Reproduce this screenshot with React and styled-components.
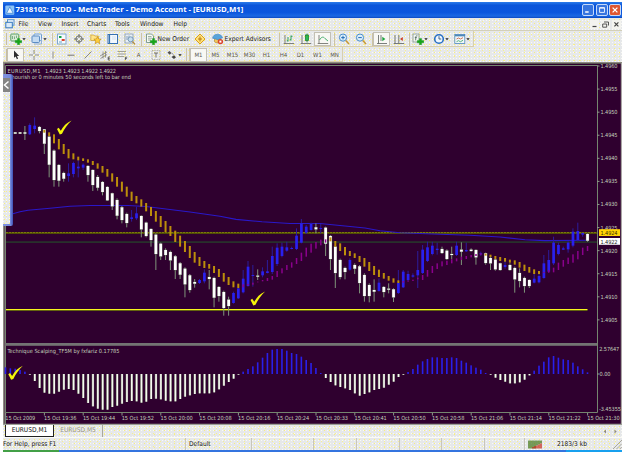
import styled, { createGlobalStyle, css } from "styled-components";

const GlobalStyle = createGlobalStyle`
    *{
        box-sizing: border-box;
    }
    html, body{
        margin: 0;
        padding: 0;
        background: #fff;
    }
    body{
        width: 625px;
        height: 452px;
        overflow: hidden;
        font-family: "DejaVu Sans Condensed", "DejaVu Sans", sans-serif;
        font-stretch: condensed;
    }
`

/* bars are 4.85px apart, 8 bars per time label */
const barX = (i) => 5.5 + i * 4.85;

/* each block: first bar, base y, rows of [high, body top, body bottom, low, up?] in thirds of a pixel */
const candleBlocks = [
    { start: 2, base: 80, rows: [
        [157,157,161,161],[157,157,161,161],[138,157,161,180],[130,135,163,165,1],[112,137,147,160,1],[138,141,153,160],
        [147,148,191,222],[168,170,254,292],[208,212,300,320],[252,255,302,320],[275,279,296,305],[250,280,288,305,1],
        [245,249,282,292,1],[240,260,265,292,1],[250,254,263,270,1],[255,258,285,305],[268,270,315,333],[285,291,323,332],
        [303,306,336,346],[318,321,361,363],[338,340,379,390],[355,360,407,418],[378,382,420,430],[398,402,429,442],
        [390,412,417,425,1],[380,400,415,420,1],
    ]},
    { start: 28, base: 180, rows: [
        [106,108,148,172],[125,128,168,172],[145,147,180,200],[160,164,222,270],[188,191,229,240],[205,210,225,240],
        [212,216,241,270],[225,229,270,297],[246,250,284,297],[262,266,313,352],[282,286,330,338],[297,306,311,323],
        [297,300,309,312,1],[268,278,304,310,1],[270,291,297,328],[290,294,353,382],[318,321,348,365],[332,336,384,407],
        [350,359,378,407],[335,339,369,371,1],[315,325,355,357,1],[270,296,337,340,1],[243,260,318,320,1],[255,285,287,320,1],
        [268,287,290,300],[262,274,286,292,1],[240,274,279,280,1],[200,228,276,282,1],[190,203,252,258,1],[188,200,228,232,1],
        [185,202,212,215,1],[200,204,207,208,1],
    ]},
    { start: 60, base: 200, rows: [
        [85,107,147,150,1],[57,70,128,130,1],[75,80,98,102,1],[68,72,90,92,1],[70,82,88,100],[72,84,86,100,1],
        [80,83,131,168],[105,108,177,210],[135,140,219,264],[176,180,231,238],[200,204,216,238],[175,180,209,212,1],
        [190,195,206,222],[195,199,249,280],[220,225,288,305],[250,255,288,307],[238,270,275,305],[235,248,273,275,1],
        [258,261,276,292],[250,266,269,280],[265,268,292,306],[210,249,279,282,1],[210,215,262,264,1],[212,222,240,243,1],
        [220,226,230,233,1],[153,210,226,264,1],[135,149,219,222,1],[125,142,183,186,1],[125,137,162,166,1],[128,146,150,164,1],
        [140,147,159,162],[148,152,177,180],[140,162,165,178],[125,137,165,168,1],[127,149,155,195],[128,150,154,156,1],
        [145,149,153,155],[148,150,172,194],[155,160,162,168,1],[158,160,189,194],[170,174,190,210],[175,179,208,212],
        [188,190,210,212],[178,195,201,206,1],[190,195,210,212],[200,204,238,278],[205,219,243,262],[230,234,258,278],
        [238,240,258,264],[222,236,248,250,1],[222,228,247,250,1],[165,190,234,236,1],[150,180,215,218,1],[110,128,190,195,1],
        [128,135,162,166,1],[140,145,149,150,1],[124,128,148,158,1],[85,95,137,142,1],[68,93,120,124,1],[98,99,104,110,1],
        [100,102,122,125],
    ]},
];

const trendBlocks = [
    { start: 8, base: 80, rows: [[150,158],[157,168],[163,190],[177,208],[192,222],[207,235],[220,238],[230,241],[235,243],[238,248],[243,255],[250,266],[258,278],[267,290],[280,305],[291,320],[305,335],[320,350],[335,363],[348,370]] },
    { start: 28, base: 180, rows: [[58,80],[69,94],[81,108],[93,125],[108,141],[123,156],[138,168],[152,186],[167,200],[183,216],[198,234],[216,248],[231,258],[243,264],[252,266],[258,279],[267,291],[279,305],[291,315],[304,322],[311,324]] },
    { start: 49, base: 180, up: true, rows: [[313,322],[312,316],[308,314],[305,307],[300,304],[294,303],[288,299],[273,291],[265,280],[255,270],[247,263],[234,252]] },
    { start: 61, base: 200, up: true, rows: [[158,183],[143,170],[131,158],[126,146],[119,136],[118,128]] },
    { start: 67, base: 200, rows: [[112,124],[123,140],[130,153],[141,166],[153,168],[160,174],[168,186],[174,200],[186,213],[198,225],[209,231],[219,236],[228,242],[235,248],[241,249]] },
    { start: 82, base: 200, up: true, rows: [[243,248],[242,245],[239,243],[233,238],[225,240],[210,230],[198,219],[190,207],[184,199],[182,195],[178,190],[175,184],[170,180],[168,177],[165,172],[162,168],[160,165]] },
    { start: 99, base: 200, rows: [[161,167],[164,171],[168,177],[171,183],[174,185],[179,188],[181,194],[186,203],[194,213],[201,218],[208,222],[213,222]] },
    { start: 111, base: 200, up: true, rows: [[216,219],[210,218],[203,217],[188,210],[180,200],[173,192],[163,188],[153,178],[143,165],[138,153]] },
];

/* bar ends in thirds of a pixel, the zero line is at 132 */
const histogram = [
    112,115,116,120,125,134,153,174,188,191,191,185,179,177,180,191,204,219,229,236,239,239,231,227,221,216,213,214,218,215,
    207,206,208,212,214,214,207,200,196,192,190,190,190,187,178,167,156,146,134,125,117,109,97,83,69,59,57,57,62,69,
    72,80,90,99,114,129,144,156,166,171,175,180,190,197,192,187,180,177,173,164,155,141,134,126,117,104,94,87,82,82,
    84,84,82,84,92,98,106,113,119,129,134,143,150,155,160,160,157,149,136,122,107,95,82,78,83,88,90,98,109,118,127,
];

const times = ["2009","19:36","19:44","19:52","20:00","20:08","20:16","20:24","20:33","20:41","20:50","20:58","21:06","21:14","21:22","21:30"];
const prices = ["1.4960","1.4955","1.4950","1.4945","1.4940","1.4935","1.4930","1.4925","1.4920","1.4915","1.4910","1.4905"];
const periods = ["M5","M15","M30","H1","H4","D1","W1","MN"];

function Candle({ x, base, row }){
    const [high, top, bottom, low, up] = row;
    const y = (v) => base + v / 3;
    return(
        <g>
            <rect x={x - 0.5} y={y(high)} width="1" height={(low - high) / 3} fill={up ? "#2c1c9c" : "#7f947a"} />
            {!up && <rect x={x - 1.7} y={y(top) - 0.3} width="3.4" height={(bottom - top) / 3 + 0.6} fill="#56604f" />}
            <rect x={x - 1.3} y={y(top)} width="2.7" height={Math.max(1, (bottom - top) / 3)} fill={up ? "#2a20ee" : "#ffffff"} />
        </g>
    )
}

function Check({ x, y }){
    return <path transform={`translate(${x} ${y})`} d="M0 8.4 L1.7 7.2 L3.8 10.2 C6 6 9.5 2.2 14.6 0 C11 3.5 7.4 8 5 13.2 L2.8 14 Z" fill="#f4f40a" />
}

function Chart(){
    return(
        <ChartSvg viewBox="3 62 619 363">
            <rect x="3" y="62" width="619" height="363" fill="#2f002f" />
            <path d="M3 62.5H622" stroke="#8d8a82" />
            <path d="M3 63.5H622" stroke="#595650" />
            <path d="M3.8 62V425" stroke="#8d8d83" strokeWidth="1.6" />
            <path d="M621.4 63V425" stroke="#a9a5a4" strokeWidth="1.2" />
            <path d="M3 424.5H622" stroke="#9da096" strokeWidth="1.6" />
            <path d="M5.5 424V65.5H597.5V412.5H5.5" fill="none" stroke="#75856f" />
            <rect x="5" y="343" width="592" height="2.8" fill="#737373" />

            <rect x="6" y="232" width="591" height="2" fill="#514d06" />
            <path d="M6 232.5H597" stroke="#85830c" strokeWidth="0.8" strokeDasharray="2 1" />
            <rect x="6" y="241.2" width="591" height="1.8" fill="#28302c" />
            <rect x="6" y="309" width="581.5" height="1" fill="#f7f71d" />
            <rect x="6" y="310" width="581.5" height="1" fill="#65650e" />
            <path
                d="M12 214 L20 211.7 L28 210.3 L50 208.2 L70 206.3 L90 205.5 L128 205.5 L146 206.5 L160 208.3 L190 212 L220 216.3 L236 219.4 L262 221.8 L290 223.5 H320 L345 226 L365 228 L380 230.8 L400 232.7 L440 234.2 L470 235.2 L500 237 L525 239.8 L545 240.6 L587 240.2"
                fill="none" stroke="#2a17c8" strokeWidth="1.1"
            />
            {candleBlocks.map(({ start, base, rows }) => rows.map((row, i) => (
                <Candle key={start + i} x={barX(start + i)} base={base} row={row} />
            )))}
            {trendBlocks.map(({ start, base, up, rows }) => rows.map(([top, bottom], i) => (
                <rect key={start + i} x={barX(start + i) - (up ? 0.7 : 1)} y={base + top / 3} width={up ? 1.5 : 2} height={(bottom - top) / 3} fill={up ? "#8a008c" : "#bd8e0b"} />
            )))}
            {histogram.map((end, i) => {
                const x = barX(i);
                const height = Math.abs(end - 132) / 3;
                if(end < 132) return <rect key={i} x={x - 0.8} y={374 - height} width="1.6" height={height} fill="#2a1fea" />
                return(
                    <g key={i}>
                        <rect x={x - 1.1} y="374" width="2.4" height={height} fill="#68755c" />
                        <rect x={x - 0.6} y="374" width="1.6" height={height} fill="#f8f8f4" />
                    </g>
                )
            })}
            <Check x={57} y={120.5} />
            <Check x={250.5} y={291.5} />
            <Check x={8.3} y={365.8} />

            <ChartText x="7.5" y="73" textLength="33">EURUSD,M1</ChartText>
            <ChartText x="45" y="73" textLength="71">1.4923 1.4923 1.4922 1.4922</ChartText>
            <ChartText x="8.5" y="79" textLength="122.5">Thourish or 0 minutes 50 seconds left to bar end</ChartText>
            <ChartText x="7.5" y="353.4" textLength="112">Technique Scalping_TF5M by fxfariz 0.17785</ChartText>
            {prices.map((price, i) => (
                <g key={price}>
                    <path d={`M597 ${66 + i * 23.08}h2.5`} stroke="#8c9788" />
                    <ChartText x="600.5" y={68 + i * 23.08} textLength="17">{price}</ChartText>
                </g>
            ))}
            <ChartText x="599.3" y="351.2" textLength="20">2.57647</ChartText>
            <path d="M597 374h2.5" stroke="#8c9788" />
            <ChartText x="599.5" y="376" textLength="11">0.00</ChartText>
            <ChartText x="599" y="410.8" textLength="22">-3.45355</ChartText>
            <rect x="599" y="229.2" width="21" height="6.8" fill="#ffd305" />
            <ChartText x="600.5" y="234.7" textLength="17" $color="#382a00">1.4924</ChartText>
            <rect x="599" y="238" width="21" height="6.8" fill="#fff" />
            <ChartText x="600.5" y="243.5" textLength="17" $color="#222">1.4922</ChartText>
            {times.map((time, i) => (
                <g key={time}>
                    <path d={`M${5.6 + i * 38.8} 413v2.5`} stroke="#8c9788" />
                    <ChartText x={5.3 + i * 38.8} y="420.4" textLength={i ? 32.3 : 30}>15 Oct {time}</ChartText>
                </g>
            ))}
        </ChartSvg>
    )
}

function Icon({ w = 12, children }){
    return <svg width={w} height="12" viewBox={`0 0 ${w} 12`} fill="none">{children}</svg>
}

const Caret = () => <svg width="4" height="12" viewBox="0 0 4 12"><path d="M0.3 5.2h3.4L2 7.3z" fill="#222" /></svg>
const Plus = () => <path d="M5.2 7.6h2.2V5.4h2.2v2.2h2.2v2.2H9.6v2H7.4v-2H5.2z" fill="#17a51a" stroke="#0b8a12" strokeWidth="0.3" />

const icons = {
    newChart: <Icon><rect x="0.8" y="1" width="8" height="7" rx="0.8" fill="#d9ebd4" stroke="#5b9d65" /><path d="M2.5 6V3M4.5 6V3.5M6.5 5V2.6" stroke="#55936a" strokeWidth="0.7" /><Plus /></Icon>,
    profiles: <Icon><rect x="3" y="1" width="7.5" height="6.5" rx="0.8" fill="#e4eef9" stroke="#6c9dd0" /><rect x="1" y="3" width="7.5" height="6.5" rx="0.8" fill="#c3dbf2" stroke="#5c8dc4" /><path d="M3 11h7.5V5.5" stroke="#8fb0d8" /></Icon>,
    market: <Icon><rect x="1.5" y="1" width="8.5" height="10" fill="#f5fafc" stroke="#7fa8cc" /><path d="M3 4h2.5" stroke="#12a544" strokeWidth="2" /><path d="M5.7 7h3" stroke="#db3f2b" strokeWidth="2" /><path d="M3 9h3" stroke="#68a3cc" /></Icon>,
    navigator: <Icon><circle cx="6" cy="6" r="3.2" stroke="#71736c" /><path d="M6 1v4M6 7v4M1 6h4M7 6h4" stroke="#61645f" strokeWidth="0.9" /></Icon>,
    star: <Icon><path d="M0.8 2h3l1 1h3.5v4.5H.8z" fill="#ffe588" stroke="#c99b2d" strokeWidth="0.7" /><path d="M7.5 3.6l1.1 2.3 2.6.3-2 1.7.6 2.8-2.3-1.4-2.3 1.4.6-2.8-2-1.7 2.6-.3z" fill="#ffcf3c" stroke="#bd8613" strokeWidth="0.6" /></Icon>,
    dataWindow: <Icon><rect x="1" y="1.5" width="9.5" height="9" fill="#f2f8fe" stroke="#3671b1" /><path d="M2.5 2v8" stroke="#3671b1" strokeWidth="1.2" /><path d="M5 4h4M5 6h4" stroke="#bed0e3" strokeWidth="0.6" /></Icon>,
    tester: <Icon><rect x="1" y="1" width="8" height="9" fill="#e8eff5" stroke="#8598ac" strokeWidth="0.8" /><path d="M3 3v4M5 2.5v3" stroke="#5c80a6" strokeWidth="0.7" /><circle cx="6.6" cy="6.3" r="2.5" fill="#c8def0" stroke="#638cac" strokeWidth="0.8" /><path d="M8.5 8.5l2.5 2.8" stroke="#b48a37" strokeWidth="1.2" /></Icon>,
    order: <Icon><path d="M1.5 1h5l2 2v6.5h-7z" fill="#f7faf5" stroke="#678877" strokeWidth="0.8" /><path d="M3 3.5h3.5M3 5.2h4M3 7h3" stroke="#789183" strokeWidth="0.7" /><Plus /></Icon>,
    editor: <Icon><path d="M6 1l5 5-5 5-5-5z" fill="#ffe27a" stroke="#dba01a" strokeLinejoin="round" /><path d="M6 3.5v5M4 6h4" stroke="#b06f0a" strokeWidth="0.9" /></Icon>,
    expert: <Icon><path d="M2.5 5.5v3.2c1.4 1.7 4.5 1.5 6 0V5.5" fill="#f1c75b" stroke="#a78034" strokeWidth="0.6" /><path d="M.6 5.2C1 2.5 3 1.2 5.5 1.2s4.6 1.4 5 3.6L6 6.7z" fill="#57a4dc" stroke="#3c82bb" strokeWidth="0.6" /><circle cx="8.4" cy="8.6" r="2.7" fill="#d9432d" /><rect x="7.4" y="7.6" width="2" height="2" fill="#fff" /></Icon>,
    bars: <Icon><path d="M2 2v8.5M.7 10.5h10.5" stroke="#65655f" strokeWidth="0.8" /><path d="M5 4v4.5M3.8 7.8H5M8 2.5v5M8 3.3h1.5M6.7 6.8H8" stroke="#21984b" strokeWidth="0.9" /></Icon>,
    candles: <Icon><path d="M2 2v8.5M.7 10.5h10.5" stroke="#65655f" strokeWidth="0.8" /><rect x="5.5" y="2" width="3" height="5.5" fill="#2bbc4c" stroke="#14772a" strokeWidth="0.7" /><path d="M7 .5V2M7 7.5v2" stroke="#14772a" strokeWidth="0.8" /></Icon>,
    line: <Icon><path d="M2 2v8.5M.7 10.5h10.5" stroke="#65655f" strokeWidth="0.8" /><path d="M2.5 7c2-3.5 4-3.5 5.5-1.5L11 8" stroke="#39a761" strokeWidth="0.9" /></Icon>,
    zoomIn: <Icon><circle cx="5" cy="4.6" r="3.6" fill="#dceefa" stroke="#4a8dca" /><path d="M5 2.8v3.6M3.2 4.6h3.6" stroke="#236eb7" /><path d="M7.8 7.5L11 11" stroke="#c79a35" strokeWidth="1.6" /></Icon>,
    zoomOut: <Icon><circle cx="5" cy="4.6" r="3.6" fill="#dceefa" stroke="#4a8dca" /><path d="M3.2 4.6h3.6" stroke="#236eb7" /><path d="M7.8 7.5L11 11" stroke="#c79a35" strokeWidth="1.6" /></Icon>,
    scroll: <Icon><path d="M2.5 2v8.5M1 10.5h10M5 2v6" stroke="#595e5c" strokeWidth="0.8" /><path d="M6.3 3.8L9.4 6 6.3 8.2z" fill="#1ba43d" /></Icon>,
    shift: <Icon><path d="M2 2v8.5M.7 10.5h10.5M5.8 2v8" stroke="#595e5c" strokeWidth="0.8" /><path d="M9.8 4L7 6l2.8 2z" fill="#cc3f26" /></Icon>,
    indicators: <Icon><rect x="1" y="1" width="6" height="8" fill="#f1f5f2" stroke="#83948b" strokeWidth="0.8" /><path d="M5.4 2.8c-1.8-.5-1.5 1-1.8 4.5M2.8 4.6h2" stroke="#4a6558" strokeWidth="0.8" /><Plus /></Icon>,
    clock: <Icon><circle cx="6" cy="6" r="4.3" fill="#edf6fe" stroke="#286fc4" strokeWidth="1.6" /><path d="M6 3.2V6h2.2" stroke="#385878" strokeWidth="0.9" /></Icon>,
    template: <Icon><rect x="0.8" y="1.5" width="10" height="9" fill="#f1f7fa" stroke="#4c87bb" strokeWidth="0.8" /><path d="M1 2.5h10" stroke="#4c87bb" strokeWidth="1.7" /><path d="M2.5 6l2-1 2 1 2.5-1.4" stroke="#c25b38" strokeWidth="0.8" /><path d="M2.5 8.7l2-1 2 1 2.5-1.4" stroke="#31a05c" strokeWidth="0.8" /></Icon>,
    cursor: <Icon><path d="M4 1.5v7.3l1.7-1.4 1.2 2.8 1.2-.6-1.2-2.6h2.3z" fill="#2c2c2c" /></Icon>,
    cross: <Icon><path d="M6 1v4M6 7v4M1 6h4M7 6h4" stroke="#77766e" strokeWidth="0.8" /></Icon>,
    vline: <Icon><path d="M6 2.5v7" stroke="#89877d" strokeWidth="0.9" /></Icon>,
    hline: <Icon><path d="M2.5 6.2h7" stroke="#77756d" /></Icon>,
    trend: <Icon><path d="M2.5 9.5l7-7" stroke="#7f7d76" strokeWidth="0.9" /></Icon>,
    channel: <Icon><path d="M1 7l7-4M1.5 9.5l6.5-4M4 2.5v7M6.5 2v6.5" stroke="#77756c" strokeWidth="0.7" /><path d="M11 8H9.2v3H11M9.2 9.5h1.5" stroke="#333" strokeWidth="0.7" /></Icon>,
    fibo: <Icon><path d="M1.5 2.5H10M1.5 5H10M1.5 7.5H8" stroke="#918e80" strokeWidth="0.8" /><path d="M11.2 8.2H9.4V11M9.4 9.5h1.5" stroke="#333" strokeWidth="0.7" /></Icon>,
    label: <Icon><rect x="2" y="1.5" width="8" height="9" stroke="#a19f94" strokeWidth="0.8" strokeDasharray="1 0.7" /><path d="M4 4h4M6 4v4.5" stroke="#66645d" strokeWidth="0.9" /></Icon>,
    arrows: <Icon><path d="M1.5 3.5L3.5 2l2 2-1.8 1.8z" fill="#55534f" /><path d="M5.5 8L8 6.3l2 1.9L8 10z" fill="#444" /><path d="M5.5 4l2 1.5" stroke="#777" strokeWidth="0.8" /></Icon>,
};

export default function App(){
    return(
        <>
            <GlobalStyle />
            <Window>
                <TitleBar>
                    <svg width="10" height="12" viewBox="0 0 10 12"><rect x="0.3" y="1.4" width="9" height="9.4" rx="1" fill="#8ec5f7" /><path d="M4.8 2.8L8.2 9.3H1.5z" fill="#eef8ff" stroke="#2c7ad4" strokeWidth="0.7" /></svg>
                    <Title>7318102: FXDD - MetaTrader - Demo Account - [EURUSD,M1]</Title>
                    <WindowButton><path d="M2.5 8h4" stroke="#fff" strokeWidth="1.7" /></WindowButton>
                    <WindowButton><path d="M3 3h5.6v5.5H3zM3 3.6h5.6" fill="none" stroke="#fff" strokeWidth="1" /></WindowButton>
                    <WindowButton $close><path d="M3 3l5.5 5.5M8.5 3L3 8.5" stroke="#fff" strokeWidth="1.5" /></WindowButton>
                </TitleBar>
                <MenuBar>
                    <svg width="10" height="10" viewBox="0 0 10 10"><rect x="2.5" y="0.7" width="6.5" height="5.5" fill="#edf5fc" stroke="#5590cf" /><rect x="0.8" y="3.3" width="6.5" height="5.5" fill="#dcebf8" stroke="#3878be" /></svg>
                    <MenuItem $w={19.5}>File</MenuItem>
                    <MenuItem $w={23.5}>View</MenuItem>
                    <MenuItem $w={25.5}>Insert</MenuItem>
                    <MenuItem $w={28}>Charts</MenuItem>
                    <MenuItem $w={25}>Tools</MenuItem>
                    <MenuItem $w={33.5}>Window</MenuItem>
                    <MenuItem $w={20}>Help</MenuItem>
                    <MdiButtons>
                        <svg width="9" height="9" viewBox="0 0 9 9"><path d="M2.5 6.5h4" stroke="#444" strokeWidth="1.2" /></svg>
                        <svg width="9" height="9" viewBox="0 0 9 9"><path d="M3 2h4.5v3.5M1.7 4h4v3.2h-4z" fill="none" stroke="#444" strokeWidth="0.9" /></svg>
                        <svg width="9" height="9" viewBox="0 0 9 9"><path d="M2.4 2.4l4 4M6.4 2.4l-4 4" stroke="#444" strokeWidth="1.2" /></svg>
                    </MdiButtons>
                </MenuBar>
                <Toolbar $h={16}>
                    <Tools $w={471}>
                        <Grip />
                        <Slot $w={21}>{icons.newChart}<Caret /></Slot>
                        <Slot $w={21}>{icons.profiles}<Caret /></Slot>
                        <Divider $w={4} />
                        <Slot $w={17}>{icons.market}</Slot>
                        <Slot $w={17}>{icons.navigator}</Slot>
                        <Slot $w={17}>{icons.star}</Slot>
                        <Slot $w={17}>{icons.dataWindow}</Slot>
                        <Slot $w={17}>{icons.tester}</Slot>
                        <Divider $w={4} />
                        <Slot $w={49} $start>{icons.order}<Caption>New Order</Caption></Slot>
                        <Slot $w={18}>{icons.editor}</Slot>
                        <Slot $w={66} $start>{icons.expert}<Caption>Expert Advisors</Caption></Slot>
                        <Divider $w={5} />
                        <Slot $w={17}>{icons.bars}</Slot>
                        <Slot $w={17}>{icons.candles}</Slot>
                        <Slot $w={17} $pressed>{icons.line}</Slot>
                        <Divider $w={4} />
                        <Slot $w={17}>{icons.zoomIn}</Slot>
                        <Slot $w={17}>{icons.zoomOut}</Slot>
                        <Divider $w={4} />
                        <Slot $w={17} $pressed>{icons.scroll}</Slot>
                        <Slot $w={17}>{icons.shift}</Slot>
                        <Divider $w={3} />
                        <Slot $w={20}>{icons.indicators}<Caret /></Slot>
                        <Slot $w={21}>{icons.clock}<Caret /></Slot>
                        <Slot $w={21}>{icons.template}<Caret /></Slot>
                    </Tools>
                </Toolbar>
                <Toolbar $h={15}>
                    <Tools $w={340}>
                        <Grip />
                        <Slot $w={17} $pressed>{icons.cursor}</Slot>
                        <Slot $w={20}>{icons.cross}</Slot>
                        <Slot $w={18}>{icons.vline}</Slot>
                        <Slot $w={17}>{icons.hline}</Slot>
                        <Slot $w={17}>{icons.trend}</Slot>
                        <Slot $w={17}>{icons.channel}</Slot>
                        <Slot $w={17}>{icons.fibo}</Slot>
                        <Slot $w={17}><Period>A</Period></Slot>
                        <Slot $w={17}>{icons.label}</Slot>
                        <Slot $w={19}>{icons.arrows}<Caret /></Slot>
                        <Divider $w={4} />
                        <Divider $w={3} />
                        <Slot $w={17} $pressed><Period>M1</Period></Slot>
                        {periods.map((period) => <Slot key={period} $w={17}><Period>{period}</Period></Slot>)}
                    </Tools>
                </Toolbar>
                <Chart />
                <Tabs>
                    <Tab $active>EURUSD,M1</Tab>
                    <Tab>EURUSD,M5</Tab>
                    <svg width="18" height="7" viewBox="0 0 18 7"><path d="M4 1.5v4L1.8 3.5zM12.5 1.5v4l2.2-2z" fill="#8c8a83" /></svg>
                </Tabs>
                <StatusBar>
                    <Cell $w={183}>For Help, press F1</Cell>
                    <Cell $w={66}>Default</Cell>
                    <Cell $w={61.5} />
                    <Cell $w={43} />
                    <Cell $w={43} />
                    <Cell $w={42} />
                    <Cell $w={43} />
                    <Cell $w={40.5} />
                    <Cell $w={97}>
                        <svg width="15" height="9" viewBox="0 0 15 9">
                            <path d="M1 .5v8M3 .5v8M5 .5v8M7 .5v8M9 .5v5M11 .5v4M13 .5v3" stroke="#44771c" strokeWidth="1.4" />
                            <path d="M9 5.5v3M11 4.5v4M13 3.5v5M5 7v1.5M7 6v2.5" stroke="#c72f21" strokeWidth="1.4" />
                        </svg>
                        <Traffic>2183/3 kb</Traffic>
                        <svg width="9" height="10" viewBox="0 0 9 10"><path d="M0 10L9 1M3.5 10L9 4.5M6.8 10L9 7.8" stroke="#aaa79b" /></svg>
                    </Cell>
                </StatusBar>
                <Taskbar><Start /><Tray /></Taskbar>
                <SidePanel>
                    <PanelBody><Chevron viewBox="0 0 7 14"><rect width="7" height="14" fill="#858585" /><path d="M5.5 3.5L1.5 7l4 3.5" fill="none" stroke="#fff" strokeWidth="1.5" /></Chevron></PanelBody>
                </SidePanel>
            </Window>
        </>
    )
}

const dither = css`
    background-color: #e6e8ea;
    background-image:
        radial-gradient(circle at 1.5px 1.5px, #fbf07a 0.7px, transparent 0.8px),
        radial-gradient(circle at 3.5px 3.5px, #f8f090 0.7px, transparent 0.8px),
        radial-gradient(circle at 0.5px 2.5px, #fafaf5 0.7px, transparent 0.8px);
    background-size: 5px 4px, 7px 5px, 3px 3px;
`
const Window = styled.div`
    position: relative;
    width: 619px;
    height: 450px;
    margin: 2px 0 0 3px;
    display: flex;
    flex-direction: column;
    overflow: hidden;
    color: #1a1a1a;
    font-size: 6.6px;
    line-height: 1;
    white-space: nowrap;
    svg{
        flex: none;
    }
`
const TitleBar = styled.div`
    display: flex;
    align-items: center;
    flex: 0 0 16px;
    padding: 0 1px 0 2px;
    gap: 1.5px;
    background: linear-gradient(#2b7cea, #0b55da 20%, #0a56dd 65%, #1b68e3 88%, #0a48c0);
`
const Title = styled.div`
    flex: 1;
    margin-left: -1px;
    color: #fff;
    font-family: "Open Sans", sans-serif;
    font-size: 7.8px;
    font-weight: 700;
    font-stretch: normal;
    letter-spacing: -0.03px;
`
const WindowButton = styled.svg.attrs({ viewBox: "0 0 11.5 11.5" })`
    width: 12px;
    height: 12px;
    border: 0.5px solid #c5dafa;
    border-radius: 2px;
    background: ${({ $close }) => $close ? "#df5731" : "#3775df"};
`
const MenuBar = styled.div`
    ${dither}
    display: flex;
    align-items: center;
    flex: 0 0 13px;
    padding-left: 2px;
    border-bottom: 1px solid #d3cfb9;
`
const MenuItem = styled.span`
    flex: none;
    width: ${({ $w }) => $w}px;
    padding-left: 3.5px;
`
const MdiButtons = styled.div`
    display: flex;
    gap: 2px;
    margin-left: auto;
    padding-right: 1px;
    svg{
        background: #f3f3ef;
    }
`
const Toolbar = styled.div`
    ${dither}
    flex: 0 0 ${({ $h }) => $h}px;
    min-height: 0;
`
const Tools = styled.div`
    display: flex;
    align-items: center;
    width: ${({ $w }) => $w}px;
    height: 100%;
    padding-top: 1px;
    border-right: 1px solid #d8cfae;
    border-bottom: 1px solid #d8cfae;
`
const Grip = styled.div`
    flex: 0 0 4px;
    height: 12px;
    border-right: 1px solid #c9bf9d;
`
const Slot = styled.div`
    display: flex;
    align-items: center;
    justify-content: ${({ $start }) => $start ? "flex-start" : "center"};
    flex: 0 0 ${({ $w }) => $w}px;
    height: 14px;
    padding-left: ${({ $start }) => $start ? 2.5 : 0}px;
    ${({ $pressed }) => $pressed && css`
        background: #f8f8f4;
        border: 1px solid #c3c0b4;
        svg{
            margin: 0 -1px;
        }
    `}
`
const Divider = styled.div`
    flex: 0 0 ${({ $w }) => $w}px;
    height: 13px;
    border-right: 1px solid #cdc4a4;
`
const Caption = styled.span`
    margin-left: 1px;
`
const Period = styled.span`
    color: #5b5953;
    font-size: 6px;
    padding-top: 1px;
`
const ChartSvg = styled.svg`
    width: 619px;
    height: 363px;
`
const ChartText = styled.text`
    fill: ${({ $color }) => $color || "#c3d0bb"};
    font-size: 5.6px;
`
const Tabs = styled.div`
    ${dither}
    display: flex;
    align-items: flex-start;
    flex: 0 0 13px;
    border-bottom: 1px solid #fbfbf6;
    svg{
        margin: 3px 2px 0 auto;
    }
`
const Tab = styled.div`
    width: 49px;
    height: 12px;
    margin-left: ${({ $active }) => $active ? 2 : 0}px;
    padding-top: 2px;
    text-align: center;
    color: ${({ $active }) => $active ? "#111" : "#98958a"};
    background: ${({ $active }) => $active ? "#fff" : "transparent"};
    border: solid ${({ $active }) => $active ? "#222" : "#aaa79c"};
    border-width: ${({ $active }) => $active ? "0 1px 1px" : "0 1px 0 0"};
`
const StatusBar = styled.div`
    ${dither}
    display: flex;
    flex: 0 0 12px;
`
const Cell = styled.div`
    display: flex;
    align-items: center;
    flex: 0 0 ${({ $w }) => $w}px;
    padding-left: 3px;
    border-right: 1px solid #c9c6b9;
    &:first-child{
        padding-left: 0;
    }
    &:last-child{
        border: 0;
        padding-left: 3px;
    }
`
const Traffic = styled.span`
    margin: 0 auto 0 14px;
`
const Taskbar = styled.div`
    display: flex;
    justify-content: space-between;
    flex: 1;
    background: #3474df;
`
const Start = styled.div`
    width: 56px;
    background: #43a047;
`
const Tray = styled.div`
    width: 56px;
    background: #18a0ee;
`
const SidePanel = styled.div`
    position: absolute;
    left: 0;
    top: 72px;
    width: 9.5px;
    height: 152px;
    padding: 4px 2.5px 2px 0;
    background: linear-gradient(90deg, #8394df, #7388dc 75%, #3e4fb4);
    border-radius: 0 3px 2px 0;
`
const PanelBody = styled.div`
    ${dither}
    height: 100%;
`
const Chevron = styled.svg`
    display: block;
    width: 7px;
    height: 14px;
`
